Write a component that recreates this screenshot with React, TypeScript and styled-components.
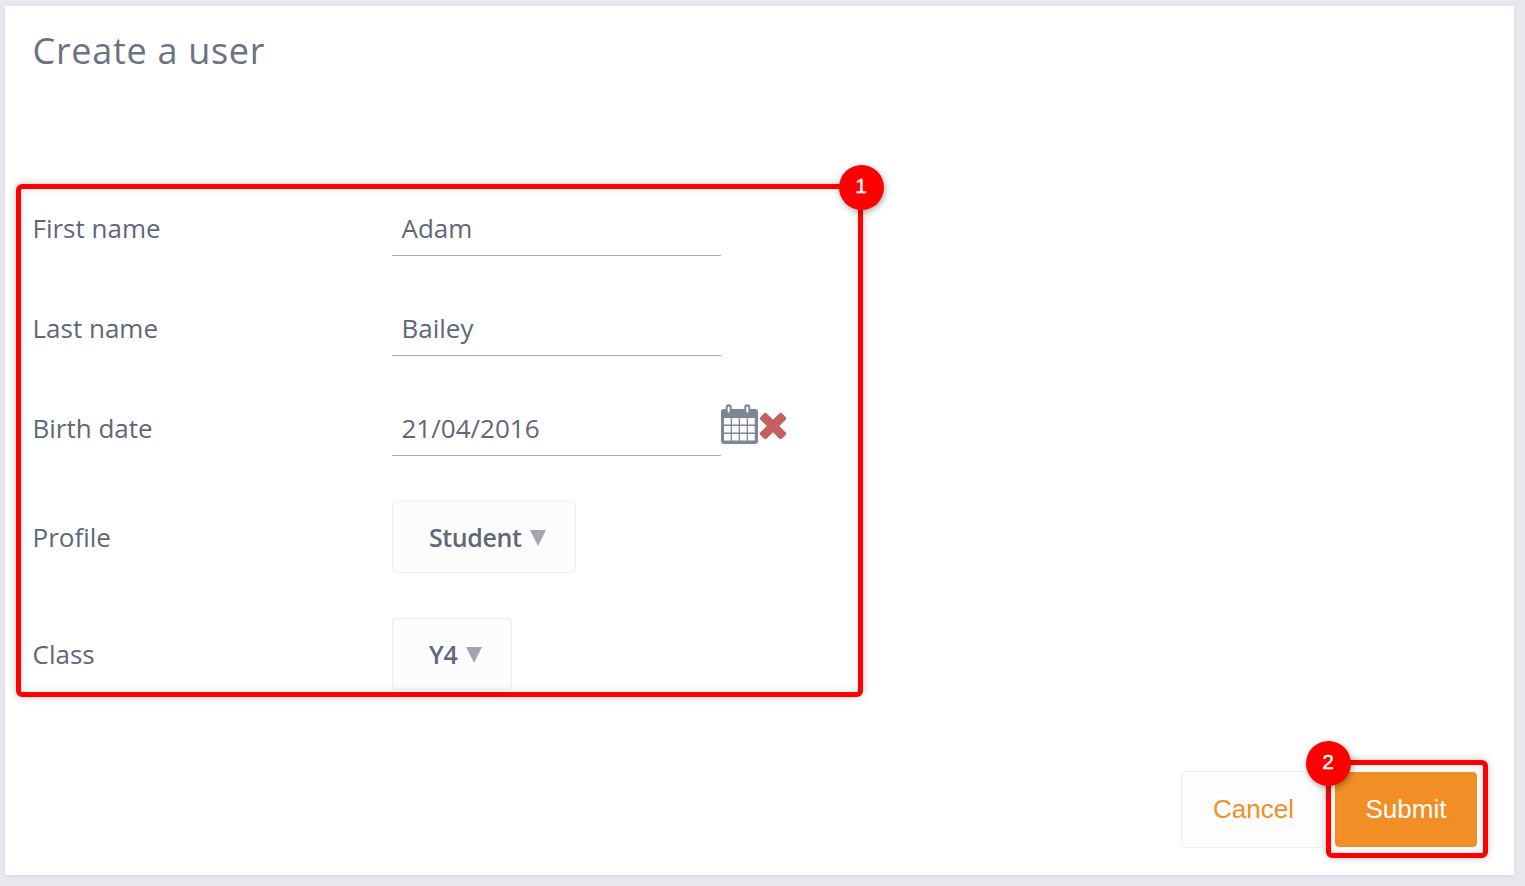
import styled, { createGlobalStyle } from "styled-components";

const GlobalStyle = createGlobalStyle`
  html, body {
    margin: 0;
    height: 100%;
    background-color: #e6e8ee;
    overflow: hidden;
  }
`;

const Page = styled.div`
  width: 1525px;
  height: 886px;
  box-sizing: border-box;
  padding: 6px 11px 11px 5px;
  font-family: "Open Sans", "Liberation Sans", sans-serif;
`;

const Card = styled.div`
  position: relative;
  height: 100%;
  box-sizing: border-box;
  padding: 24px 27.5px 0;
  background-color: #fff;
  box-shadow: 0 1px 3px rgba(120, 125, 145, 0.15);
  display: flex;
  flex-direction: column;
`;

const Title = styled.div`
  font-size: 36px;
  line-height: 42px;
  letter-spacing: 0.7px;
  color: #6b7282;
`;

const Form = styled.div`
  margin-top: 106px;
  display: flex;
  flex-direction: column;
`;

const Row = styled.div<{ $height: number }>`
  display: flex;
  align-items: center;
  height: ${(p) => p.$height}px;
`;

const Label = styled.div`
  width: 359.5px;
  font-size: 26px;
  color: #5f6778;
`;

const Input = styled.div`
  width: 329px;
  height: 56px;
  box-sizing: border-box;
  padding: 3px 9.5px 0;
  border-bottom: 1px solid #a9abb2;
  font-size: 26px;
  line-height: 51px;
  color: #5f6778;
`;

const DateIcons = styled.div`
  display: flex;
  align-items: flex-start;
  gap: 1px;
  margin-bottom: 8px;
`;

const CrossWrap = styled.span`
  display: flex;
  margin-top: 8px;
`;

const Select = styled.div`
  display: flex;
  align-items: center;
  gap: 9px;
  height: 72px;
  box-sizing: border-box;
  padding: 0 29px 0 36px;
  background-color: #fcfcfd;
  border: 1px solid #edeef3;
  border-radius: 4px;
  font-size: 25px;
  font-weight: 600;
  letter-spacing: -0.4px;
  color: #5f6778;
`;

const Caret = styled.span`
  width: 0;
  height: 0;
  margin-top: 1px;
  border-left: 8px solid transparent;
  border-right: 8px solid transparent;
  border-top: 16px solid #a3a6b0;
`;

const Actions = styled.div`
  position: absolute;
  right: 37px;
  bottom: 27px;
  display: flex;
  align-items: center;
  gap: 9px;
`;

const Button = styled.div<{ $primary?: boolean }>`
  display: flex;
  align-items: center;
  justify-content: center;
  box-sizing: border-box;
  width: ${(p) => (p.$primary ? 142 : 145)}px;
  height: ${(p) => (p.$primary ? 75 : 77)}px;
  border-radius: 4px;
  border: 1px solid ${(p) => (p.$primary ? "#f28e26" : "#edeef0")};
  background-color: ${(p) => (p.$primary ? "#f28e26" : "#fdfdfd")};
  color: ${(p) => (p.$primary ? "#fff" : "#f28e26")};
  font-family: "Liberation Sans", Arial, sans-serif;
  font-size: 26px;
`;

const Highlight = styled.div<{ $l: number; $t: number; $w: number; $h: number }>`
  position: absolute;
  left: ${(p) => p.$l}px;
  top: ${(p) => p.$t}px;
  width: ${(p) => p.$w}px;
  height: ${(p) => p.$h}px;
  box-sizing: border-box;
  border: 5px solid #ff0000;
  border-radius: 6px;
  box-shadow: 0 0 8px rgba(0, 0, 0, 0.22), inset 0 0 8px rgba(0, 0, 0, 0.12);
  pointer-events: none;
`;

const Badge = styled.div<{ $l: number; $t: number }>`
  position: absolute;
  left: ${(p) => p.$l}px;
  top: ${(p) => p.$t}px;
  width: 45px;
  height: 45px;
  border-radius: 50%;
  background-color: #ff0000;
  box-shadow: 1px 2px 6px rgba(0, 0, 0, 0.35);
  display: flex;
  align-items: center;
  justify-content: center;
  color: #fff;
  font-family: "Liberation Sans", Arial, sans-serif;
  font-size: 21px;
  -webkit-text-stroke: 0.4px #fff;
  padding-bottom: 4px;
  box-sizing: border-box;
`;

const gridRows = [14, 22, 30];
const gridCols = [3, 11, 19, 27];

const CalendarIcon = () => (
  <svg width="37" height="40" viewBox="0 0 37 40">
    <rect x="0" y="5" width="37" height="35" rx="3" fill="#7f8597" />
    <rect x="4.7" y="0.300" width="6" height="10" rx="3" fill="#7f8597" />
    <rect x="23.3" y="0.300" width="6" height="10" rx="3" fill="#7f8597" />
    <rect x="6.700" y="2.500" width="2" height="6" rx="1" fill="#fff" />
    <rect x="25.300" y="2.500" width="2" height="6" rx="1" fill="#fff" />
    <g fill="#fff">
      {gridRows.map((y) =>
        gridCols.map((x) => (
          <rect key={`${x}-${y}`} x={x} y={y} width="6.700" height="6.500" />
        ))
      )}
    </g>
  </svg>
);

const CrossIcon = () => (
  <svg width="28" height="28" viewBox="0 0 28 28">
    <g fill="#c56060">
      <rect x="-1.300" y="9.500" width="30.600" height="9" rx="2" transform="rotate(45 14 14)" />
      <rect x="-1.300" y="9.500" width="30.600" height="9" rx="2" transform="rotate(-45 14 14)" />
    </g>
  </svg>
);

export default function App() {
  return (
    <Page>
      <GlobalStyle />
      <Card>
        <Title>Create a user</Title>
        <Form>
          <Row $height={100}>
            <Label>First name</Label>
            <Input>Adam</Input>
          </Row>
          <Row $height={100}>
            <Label>Last name</Label>
            <Input>Bailey</Input>
          </Row>
          <Row $height={100}>
            <Label>Birth date</Label>
            <Input>21/04/2016</Input>
            <DateIcons>
              <CalendarIcon />
              <CrossWrap>
                <CrossIcon />
              </CrossWrap>
            </DateIcons>
          </Row>
          <Row $height={118}>
            <Label>Profile</Label>
            <Select>
              Student
              <Caret />
            </Select>
          </Row>
          <Row $height={116}>
            <Label>Class</Label>
            <Select>
              Y4
              <Caret />
            </Select>
          </Row>
        </Form>
        <Actions>
          <Button>Cancel</Button>
          <Button $primary>Submit</Button>
        </Actions>
        <Highlight $l={11} $t={178} $w={847} $h={513} />
        <Badge $l={833.5} $t={159}>1</Badge>
        <Highlight $l={1321} $t={754} $w={162} $h={98} />
        <Badge $l={1300.5} $t={735}>2</Badge>
      </Card>
    </Page>
  );
}
